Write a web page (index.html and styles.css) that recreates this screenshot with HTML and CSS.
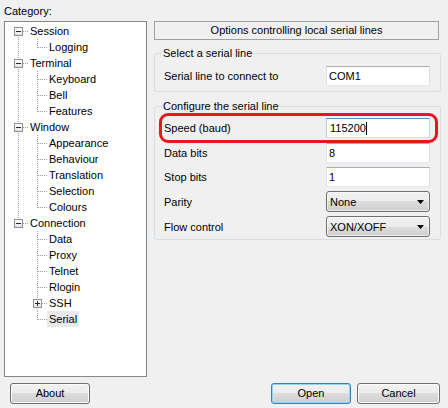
FILE: index.html
```html
<!DOCTYPE html>
<html>
<head>
<meta charset="utf-8">
<link rel="stylesheet" href="styles.css">
</head>
<body>
<div class="dialog">
  <div class="left">
    <div class="cat-label">Category:</div>
    <div class="tree">
      <div class="row root first"><span class="box minus"></span><span class="lbl">Session</span></div>
      <div class="row c-last"><span class="lbl">Logging</span></div>
      <div class="row root mid"><span class="box minus"></span><span class="lbl">Terminal</span></div>
      <div class="row c-mid"><span class="lbl">Keyboard</span></div>
      <div class="row c-mid"><span class="lbl">Bell</span></div>
      <div class="row c-last"><span class="lbl">Features</span></div>
      <div class="row root mid"><span class="box minus"></span><span class="lbl">Window</span></div>
      <div class="row c-mid"><span class="lbl">Appearance</span></div>
      <div class="row c-mid"><span class="lbl">Behaviour</span></div>
      <div class="row c-mid"><span class="lbl">Translation</span></div>
      <div class="row c-mid"><span class="lbl">Selection</span></div>
      <div class="row c-last"><span class="lbl">Colours</span></div>
      <div class="row root last"><span class="box minus"></span><span class="lbl">Connection</span></div>
      <div class="row cc-mid"><span class="lbl">Data</span></div>
      <div class="row cc-mid"><span class="lbl">Proxy</span></div>
      <div class="row cc-mid"><span class="lbl">Telnet</span></div>
      <div class="row cc-mid"><span class="lbl">Rlogin</span></div>
      <div class="row cc-mid sub"><span class="box plus"></span><span class="lbl">SSH</span></div>
      <div class="row cc-last"><span class="lbl selected">Serial</span></div>
    </div>
  </div>
  <div class="right">
    <div class="header">Options controlling local serial lines</div>
    <fieldset class="group g1">
      <legend>Select a serial line</legend>
      <div class="field"><span>Serial line to connect to</span><div class="edit">COM1</div></div>
    </fieldset>
    <fieldset class="group g2">
      <legend>Configure the serial line</legend>
      <div class="field speed"><span>Speed (baud)</span><div class="edit focus">115200<span class="caret"></span></div></div>
      <div class="field f-data"><span>Data bits</span><div class="edit">8</div></div>
      <div class="field f-stop"><span>Stop bits</span><div class="edit">1</div></div>
      <div class="field f-parity"><span>Parity</span><div class="combo"><span>None</span><svg class="arrow" width="7" height="4" viewBox="0 0 7 4"><polygon points="0,0 7,0 3.5,4" fill="#000"/></svg></div></div>
      <div class="field f-flow"><span>Flow control</span><div class="combo"><span>XON/XOFF</span><svg class="arrow" width="7" height="4" viewBox="0 0 7 4"><polygon points="0,0 7,0 3.5,4" fill="#000"/></svg></div></div>
    </fieldset>
  </div>
  <div class="bottom-left"><button class="btn about">About</button></div>
  <div class="bottom-right"><button class="btn open">Open</button><button class="btn cancel">Cancel</button></div>
</div>
</body>
</html>
```
FILE: styles.css
```css
html, body {
  margin: 0;
  padding: 0;
}
body {
  width: 448px;
  height: 408px;
  background: #f0f0f0;
  font-family: "Liberation Sans", Arial, sans-serif;
  font-size: 11px;
  color: #000;
  overflow: hidden;
}
.dialog {
  display: grid;
  grid-template-columns: 143px 287px;
  column-gap: 7px;
  row-gap: 6px;
  padding-left: 4px;
}
.left {
  display: flex;
  flex-direction: column;
}
.cat-label {
  height: 21px;
  box-sizing: border-box;
  padding-top: 5px;
  line-height: 13px;
}
.tree {
  height: 356px;
  box-sizing: border-box;
  border: 1px solid #828790;
  background: #fff;
  padding: 1px 0;
  --v: repeating-linear-gradient(180deg, #a0a0a0 0 1px, transparent 1px 2px);
  --h: repeating-linear-gradient(90deg, #a0a0a0 0 1px, transparent 1px 2px);
}
.row {
  height: 16px;
  line-height: 16px;
  display: flex;
  align-items: center;
  background-repeat: no-repeat;
  white-space: nowrap;
}
.lbl {
  padding: 0 2px;
  line-height: 16px;
}
.lbl.selected {
  background: #e9e9e9;
}
.root {
  padding-left: 9px;
}
.box {
  width: 9px;
  height: 9px;
  box-sizing: border-box;
  border: 1px solid #8f8f8f;
  background: linear-gradient(#ffffff, #e4e4e4);
  position: relative;
  margin-right: 5px;
  flex: none;
}
.box::after {
  content: "";
  position: absolute;
  left: 1px;
  top: 3px;
  width: 5px;
  height: 1px;
  background: #2a2a2a;
}
.box.plus::before {
  content: "";
  position: absolute;
  left: 3px;
  top: 1px;
  width: 1px;
  height: 5px;
  background: #2a2a2a;
}
.root.first {
  background-image: var(--v), var(--h);
  background-position: 13px 8px, 18px 8px;
  background-size: 1px 8px, 5px 1px;
}
.root.mid {
  background-image: var(--v), var(--h);
  background-position: 13px 0, 18px 8px;
  background-size: 1px 16px, 5px 1px;
}
.root.last {
  background-image: var(--v), var(--h);
  background-position: 13px 0, 18px 8px;
  background-size: 1px 8px, 5px 1px;
}
.c-mid, .c-last, .cc-mid, .cc-last {
  padding-left: 42px;
}
.c-mid {
  background-image: var(--v), var(--v), var(--h);
  background-position: 13px 0, 32px 0, 33px 8px;
  background-size: 1px 16px, 1px 16px, 9px 1px;
}
.c-last {
  background-image: var(--v), var(--v), var(--h);
  background-position: 13px 0, 32px 0, 33px 8px;
  background-size: 1px 16px, 1px 9px, 9px 1px;
}
.cc-mid {
  background-image: var(--v), var(--h);
  background-position: 32px 0, 33px 8px;
  background-size: 1px 16px, 9px 1px;
}
.cc-last {
  background-image: var(--v), var(--h);
  background-position: 32px 0, 33px 8px;
  background-size: 1px 9px, 9px 1px;
}
.row.sub {
  padding-left: 28px;
}
.right {
  padding-top: 21px;
  display: flex;
  flex-direction: column;
}
.header {
  width: 285px;
  height: 19px;
  box-sizing: border-box;
  border: 1px solid #a0a0a0;
  text-align: center;
  line-height: 17px;
}
.group {
  margin: 0;
  min-width: 0;
  border: 1px solid #d5dfe5;
  border-radius: 3px;
  padding: 0 10px 5px 9px;
}
.group legend {
  padding: 0 1px;
  margin-left: -2px;
  line-height: 13px;
}
.g1 {
  margin-top: 7px;
}
.g1 .field {
  margin-top: 6px;
}
.g2 {
  margin-top: 8px;
  padding-bottom: 2px;
}
.field {
  display: flex;
  justify-content: space-between;
  align-items: center;
  position: relative;
}
.speed { margin-top: 5px; }
.f-data { margin-top: 5px; }
.f-stop { margin-top: 4px; }
.f-parity { margin-top: 4px; }
.f-flow { margin-top: 4px; }
.edit {
  width: 104px;
  height: 20px;
  box-sizing: border-box;
  border: 1px solid;
  border-color: #abadb3 #dbdfe6 #e3e9ef #e2e3ea;
  background: #fff;
  padding-left: 2px;
  line-height: 18px;
  display: flex;
  align-items: center;
}
.edit.focus {
  border-color: #5d8cc0 #b7d9ed #c7e2f1 #b5cfe7;
  padding-left: 3px;
}
.caret {
  display: inline-block;
  width: 1px;
  height: 13px;
  background: #000;
}
.speed::after {
  content: "";
  position: absolute;
  left: -5px;
  right: -8px;
  top: -5px;
  bottom: -5px;
  border: 3px solid #e8161e;
  border-radius: 9px;
  pointer-events: none;
}
.combo {
  width: 104px;
  height: 21px;
  box-sizing: border-box;
  border: 1px solid #707070;
  border-radius: 3px;
  background: linear-gradient(#f2f2f2 0%, #ebebeb 50%, #dddddd 50%, #cfcfcf 100%);
  box-shadow: inset 0 0 0 1px rgba(255,255,255,0.6);
  display: flex;
  align-items: center;
  justify-content: space-between;
  padding: 0 5px 0 3px;
}
.arrow {
  display: block;
}
.bottom-left {
  padding-left: 6px;
}
.bottom-right {
  display: flex;
  justify-content: flex-end;
  gap: 6px;
  padding-right: 1px;
}
.btn {
  height: 21px;
  box-sizing: border-box;
  border: 1px solid #707070;
  border-radius: 3px;
  background: linear-gradient(#f2f2f2 0%, #ebebeb 50%, #dddddd 50%, #cfcfcf 100%);
  box-shadow: inset 0 0 0 1px #fcfcfc;
  font-family: "Liberation Sans", Arial, sans-serif;
  font-size: 11px;
  color: #000;
  padding: 0;
  margin: 0;
  line-height: 17px;
}
.about, .open { width: 80px; }
.cancel { width: 83px; }
.open {
  border-color: #3c7fb1;
  box-shadow: inset 0 0 0 1px #8fd6f8;
}
```
